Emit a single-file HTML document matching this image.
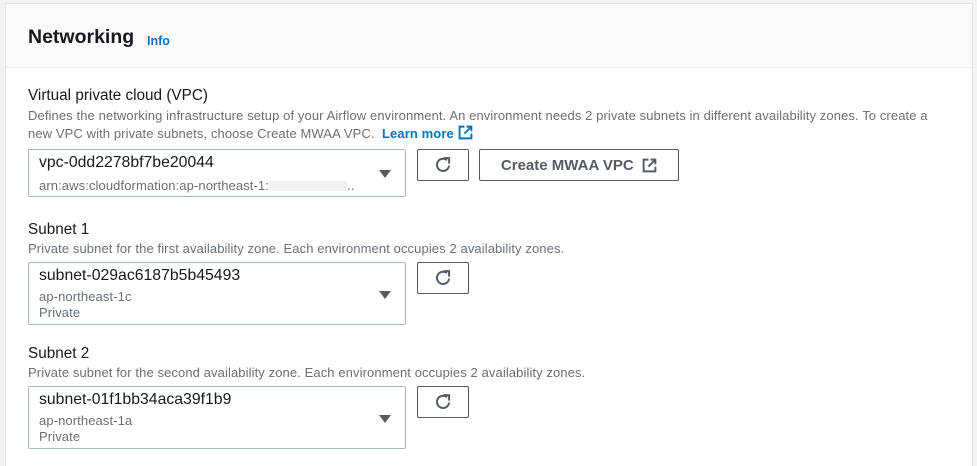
<!DOCTYPE html>
<html><head><meta charset="utf-8"><style>
*{margin:0;padding:0;box-sizing:border-box}
html,body{width:977px;height:466px;overflow:hidden}
body{background:#f2f3f3;font-family:"Liberation Sans",Arial,sans-serif;color:#16191f;position:relative}
.card{position:absolute;left:5px;top:3px;width:968px;height:463px;background:#fff;border:1px solid #e3e4e4;border-bottom:none}
.hdr{position:absolute;left:0;top:0;right:0;height:64px;background:#fafafa;border-bottom:1px solid #eaeded}
.abs{position:absolute;white-space:nowrap}
h2{font-size:19.5px;font-weight:bold}
.info{font-size:12.5px;font-weight:bold;color:#0073bb}
.lbl{font-size:15.3px}
.desc{font-size:13px;letter-spacing:0.1px;color:#687078}
.sel{position:absolute;border:1px solid #aab7b8;border-radius:2px;background:#fff;width:378px}
.sel .v{position:absolute;left:10px;top:4px;font-size:15.8px}
.sel .s{position:absolute;left:10px;font-size:13px;letter-spacing:0.1px;color:#687078}
.tri{position:absolute;right:14px;width:0;height:0;border-left:6px solid transparent;border-right:6px solid transparent;border-top:8px solid #545b64}
.btn{position:absolute;border:1px solid #545b64;border-radius:2px;background:#fff;height:32px;display:flex;align-items:center;justify-content:center;font-size:15px;font-weight:bold;color:#545b64}
</style></head><body>
<div class="card">
<div class="hdr"></div>
<div class="abs" style="left:22px;top:22px"><h2>Networking</h2></div>
<div class="abs info" style="left:141px;top:30px">Info</div>

<div class="abs lbl" style="left:22px;top:83px">Virtual private cloud (VPC)</div>
<div class="abs desc" style="left:22px;top:104px">Defines the networking infrastructure setup of your Airflow environment. An environment needs 2 private subnets in different availability zones. To create a</div>
<div class="abs desc" style="left:22px;top:121px">new VPC with private subnets, choose Create MWAA VPC. &nbsp;<b style="color:#0073bb">Learn more</b> <svg width="15" height="15" viewBox="0 0 14 14" style="vertical-align:-2px"><path d="M6 1.5H1.5v11h11V8" fill="none" stroke="#0073bb" stroke-width="1.8"/><path d="M8 1.5h4.5V6M12.5 1.5L6 8" fill="none" stroke="#0073bb" stroke-width="1.8"/></svg></div>

<div class="sel" style="left:22px;top:145px;height:48px"><div class="v">vpc-0dd2278bf7be20044</div><div class="s" style="top:28px">arn:aws:cloudformation:ap-northeast-1:<span style="display:inline-block;width:78px;height:10px;background:#f1f1f1;vertical-align:-1px"></span>..</div><div class="tri" style="top:20px"></div></div>
<div class="btn" style="left:411px;top:145px;width:52px"><svg width="20" height="20" viewBox="0 0 18 18"><path d="M14.5 9.5A5.5 5.5 0 1 1 12.5 4.6" fill="none" stroke="#545b64" stroke-width="1.8"/><path d="M9.5 2.8h5V7.8" fill="none" stroke="#545b64" stroke-width="1.8"/></svg></div>
<div class="btn" style="left:473px;top:145px;width:200px">Create MWAA VPC&nbsp;&nbsp;<svg width="15" height="15" viewBox="0 0 14 14"><path d="M6 1.5H1.5v11h11V8" fill="none" stroke="#545b64" stroke-width="1.8"/><path d="M8 1.5h4.5V6M12.5 1.5L6 8" fill="none" stroke="#545b64" stroke-width="1.8"/></svg></div>

<div class="abs lbl" style="left:22px;top:217px">Subnet 1</div>
<div class="abs desc" style="left:22px;top:237px">Private subnet for the first availability zone. Each environment occupies 2 availability zones.</div>
<div class="sel" style="left:22px;top:258px;height:63px"><div class="v">subnet-029ac6187b5b45493</div><div class="s" style="top:26px">ap-northeast-1c</div><div class="s" style="top:42px">Private</div><div class="tri" style="top:28px"></div></div>
<div class="btn" style="left:411px;top:258px;width:52px"><svg width="20" height="20" viewBox="0 0 18 18"><path d="M14.5 9.5A5.5 5.5 0 1 1 12.5 4.6" fill="none" stroke="#545b64" stroke-width="1.8"/><path d="M9.5 2.8h5V7.8" fill="none" stroke="#545b64" stroke-width="1.8"/></svg></div>

<div class="abs lbl" style="left:22px;top:341px">Subnet 2</div>
<div class="abs desc" style="left:22px;top:361px">Private subnet for the second availability zone. Each environment occupies 2 availability zones.</div>
<div class="sel" style="left:22px;top:382px;height:63px"><div class="v">subnet-01f1bb34aca39f1b9</div><div class="s" style="top:26px">ap-northeast-1a</div><div class="s" style="top:42px">Private</div><div class="tri" style="top:28px"></div></div>
<div class="btn" style="left:411px;top:382px;width:52px"><svg width="20" height="20" viewBox="0 0 18 18"><path d="M14.5 9.5A5.5 5.5 0 1 1 12.5 4.6" fill="none" stroke="#545b64" stroke-width="1.8"/><path d="M9.5 2.8h5V7.8" fill="none" stroke="#545b64" stroke-width="1.8"/></svg></div>
</div>
</body></html>
